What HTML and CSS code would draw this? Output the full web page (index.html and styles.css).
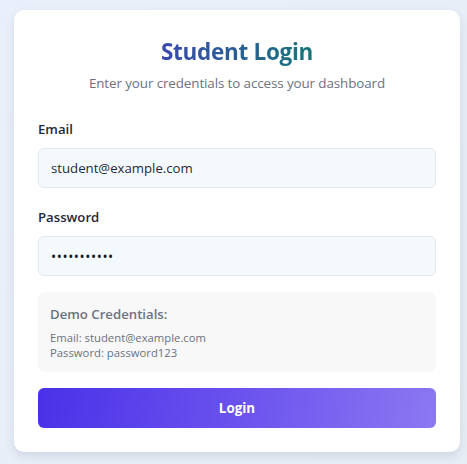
FILE: index.html
```html
<!DOCTYPE html>
<html lang="en">
<head>
<meta charset="utf-8">
<title>Student Login</title>
<link rel="stylesheet" href="styles.css">
</head>
<body>
<div class="page">
  <div class="card">
    <h1 class="title">Student Login</h1>
    <p class="subtitle">Enter your credentials to access your dashboard</p>
    <form class="form">
      <div class="field">
        <label class="label" for="email">Email</label>
        <input class="input" id="email" type="email" value="student@example.com">
      </div>
      <div class="field">
        <label class="label" for="pw">Password</label>
        <input class="input input-pw" id="pw" type="password" value="password123">
      </div>
      <div class="demo">
        <div class="demo-title">Demo Credentials:</div>
        <div class="demo-line">Email: student@example.com</div>
        <div class="demo-line">Password: password123</div>
      </div>
      <button class="btn" type="button">Login</button>
    </form>
  </div>
</div>
</body>
</html>
```
FILE: styles.css
```css
* { box-sizing: border-box; }
html, body { margin: 0; padding: 0; }
body {
  font-family: "Open Sans", "Noto Sans", sans-serif;
  background: linear-gradient(135deg, #eaf0fb 0%, #e6edf5 100%);
  min-height: 464px;
}
.page {
  padding: 10px 7px 12px 14px;
}
.card {
  background: #fff;
  border-radius: 10px;
  box-shadow: 0 4px 10px rgba(30, 50, 90, 0.12);
  padding: 26px 24px 24px;
  height: 442px;
}
.title {
  margin: 0 auto;
  text-align: center;
  font-size: 22.5px;
  line-height: 32px;
  font-weight: 700;
  letter-spacing: -0.3px;
  background: linear-gradient(90deg, #3a48b0 0%, #177679 100%);
  -webkit-background-clip: text;
  background-clip: text;
  color: transparent;
  width: max-content;
}
.subtitle {
  margin: 5px 0 0;
  text-align: center;
  font-size: 13.4px;
  line-height: 20px;
  letter-spacing: -0.1px;
  color: #6b7280;
}
.form {
  margin-top: 26px;
  display: flex;
  flex-direction: column;
}
.field {
  display: flex;
  flex-direction: column;
  margin-bottom: 19px;
}
.field + .field { margin-bottom: 16px; }
.label {
  font-size: 13.2px;
  line-height: 20px;
  font-weight: 600;
  color: #1f2937;
  margin-bottom: 9px;
}
.input {
  height: 40px;
  border: 1px solid #e2e8f0;
  border-radius: 6px;
  background: #f4f9fe;
  padding: 0 12px;
  font-family: inherit;
  font-size: 13.2px;
  color: #1f2937;
  outline: none;
}
.input-pw {
  font-size: 13.6px;
  letter-spacing: 0.6px;
  color: #111827;
}
.demo {
  background: #f8f8f8;
  border-radius: 8px;
  padding: 12px;
  margin-bottom: 16px;
}
.demo-title {
  font-size: 13.2px;
  line-height: 20px;
  font-weight: 600;
  color: #6b7280;
  margin-bottom: 6px;
}
.demo-line {
  font-size: 11.3px;
  line-height: 15px;
  color: #6b7280;
}
.btn {
  height: 40px;
  border: none;
  border-radius: 6px;
  background: linear-gradient(100deg, #4a31e8 0%, #6a52ee 50%, #8c78f2 100%);
  color: #fff;
  font-family: inherit;
  font-size: 13.4px;
  font-weight: 700;
  cursor: pointer;
}
```
